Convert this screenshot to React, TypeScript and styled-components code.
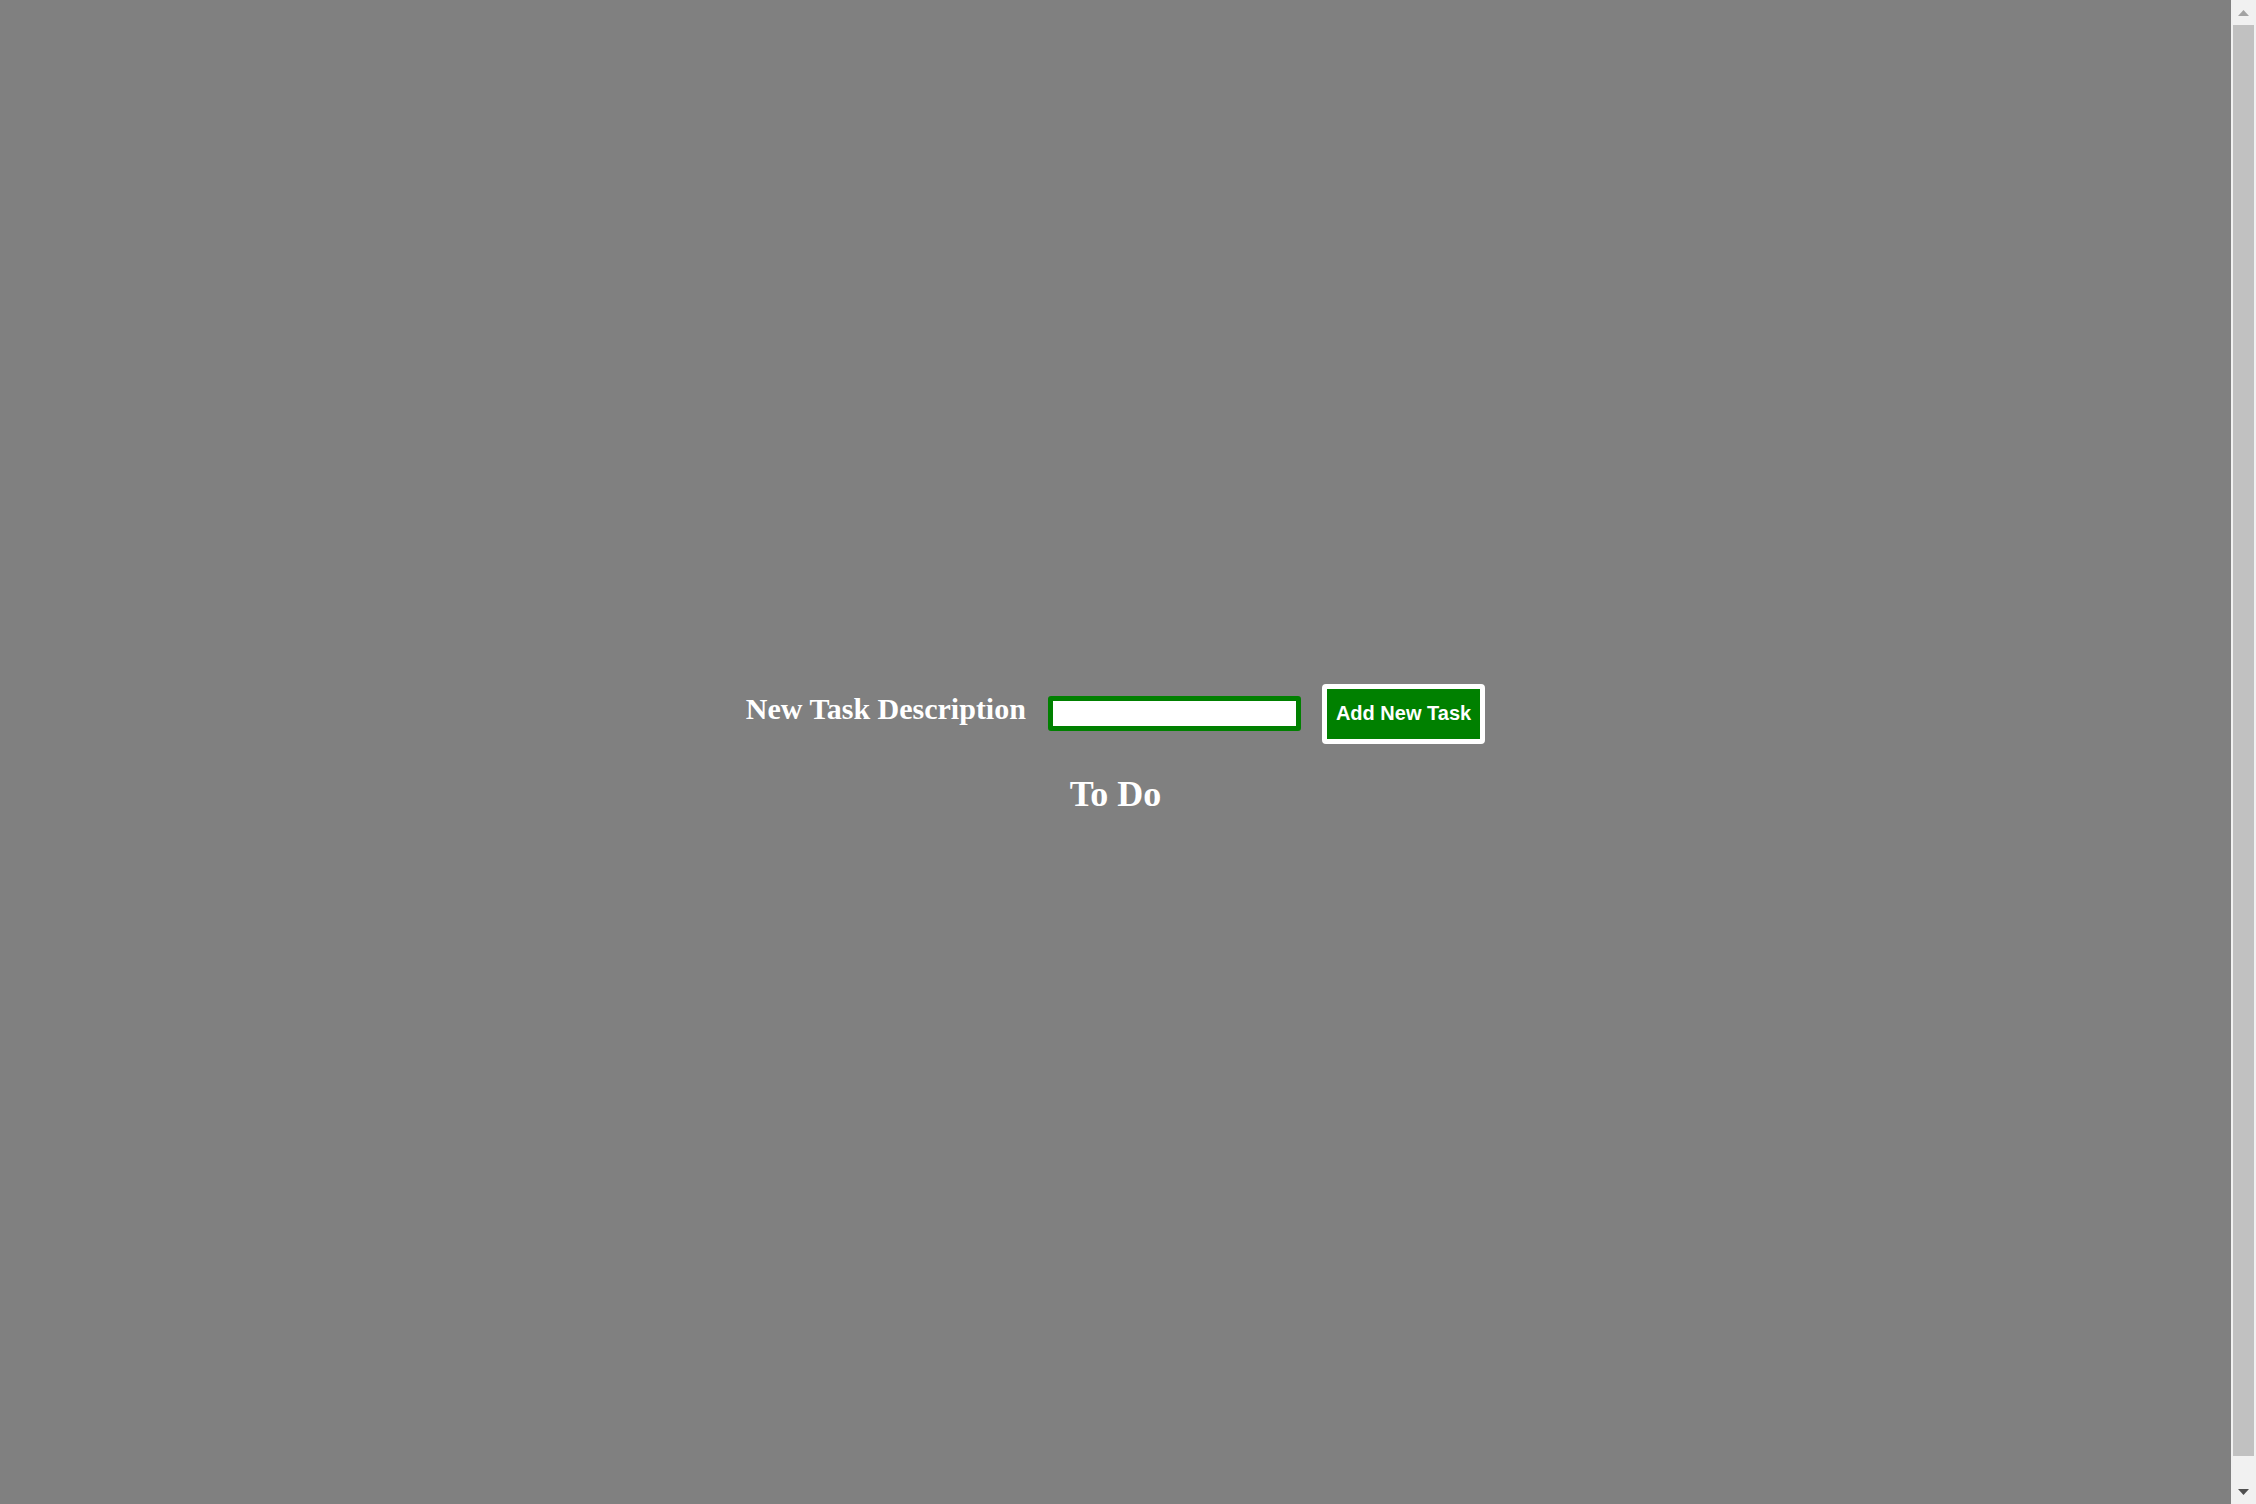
import React from "react";
import styled, { createGlobalStyle } from "styled-components";

const GlobalStyle = createGlobalStyle`
  html {
    background: #808080;
    overflow: hidden;
  }
  body {
    margin: 12px 37px 12px 12px;
    background: #808080;
    font-family: "Liberation Serif", "Times New Roman", serif;
  }
`;

const Page = styled.main`
  min-height: 100vh;
  display: flex;
  flex-direction: column;
  justify-content: center;
  align-items: center;
`;

const FormRow = styled.form`
  display: flex;
  align-items: center;
  height: 60px;
`;

const Label = styled.label`
  font-family: "Liberation Serif", "Times New Roman", serif;
  font-weight: bold;
  font-size: 30px;
  color: #ffffff;
  padding-bottom: 10px;
  margin-right: 22px;
`;

const TaskInput = styled.input`
  box-sizing: border-box;
  width: 253px;
  height: 35px;
  border: 5px solid #008000;
  border-radius: 3px;
  background: #ffffff;
  outline: none;
  padding: 0 4px;
  margin: 0 21px 0 0;
`;

const AddButton = styled.button`
  box-sizing: border-box;
  height: 60px;
  padding: 0 9px;
  background: #008000;
  color: #ffffff;
  border: 5px solid #ffffff;
  border-radius: 4px;
  font-family: "Liberation Sans", Arial, sans-serif;
  font-weight: bold;
  font-size: 20px;
  cursor: pointer;
`;

const ListTitle = styled.h2`
  margin: 30px 0;
  font-family: "Liberation Serif", "Times New Roman", serif;
  font-weight: bold;
  font-size: 36px;
  line-height: 41px;
  color: #ffffff;
  text-align: center;
`;

const ScrollBar = styled.div`
  position: fixed;
  top: 0;
  right: 0;
  width: 25px;
  height: 100vh;
  background: #f1f1f1;
  display: flex;
  flex-direction: column;
`;

const ScrollButton = styled.div`
  height: 25px;
  flex: 0 0 25px;
  display: flex;
  align-items: center;
  justify-content: center;
`;

const ScrollTrack = styled.div`
  flex: 1;
  padding: 0 2px;
`;

const ScrollThumb = styled.div`
  height: calc(100% - 23px);
  background: #c1c1c1;
`;

export default function App() {
  return (
    <>
      <GlobalStyle />
      <Page>
        <FormRow onSubmit={(e) => e.preventDefault()}>
          <Label htmlFor="task">New Task Description</Label>
          <TaskInput id="task" type="text" />
          <AddButton type="submit">Add New Task</AddButton>
        </FormRow>
        <ListTitle>To Do</ListTitle>
      </Page>
      <ScrollBar aria-hidden="true">
        <ScrollButton>
          <svg width="25" height="25" viewBox="0 0 25 25">
            <polygon points="7,16 18,16 12.5,10" fill="#a3a3a3" />
          </svg>
        </ScrollButton>
        <ScrollTrack>
          <ScrollThumb />
        </ScrollTrack>
        <ScrollButton>
          <svg width="25" height="25" viewBox="0 0 25 25">
            <polygon points="7,10 18,10 12.5,16" fill="#505050" />
          </svg>
        </ScrollButton>
      </ScrollBar>
    </>
  );
}
